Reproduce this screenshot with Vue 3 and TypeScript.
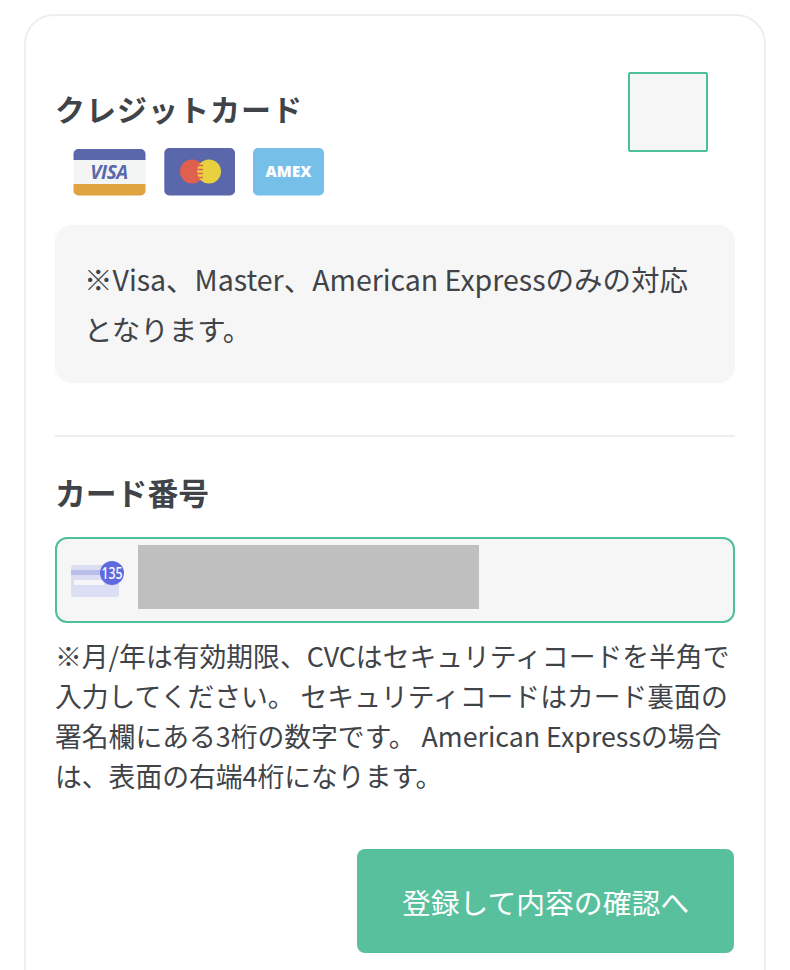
<script setup lang="ts">
const helpText =
  '※月/年は有効期限、CVCはセキュリティコードを半角で入力してください。 セキュリティコードはカード裏面の署名欄にある3桁の数字です。 American Expressの場合は、表面の右端4桁になります。'
</script>

<template>
  <main class="card">
    <section class="head">
      <div class="head-left">
        <h2 class="title">クレジットカード</h2>
        <div class="brands">
          <svg class="brand" width="73" height="48" viewBox="0 0 73 48">
            <rect x="0.5" y="1" width="72" height="46.5" rx="5" fill="#f3f5f4" />
            <path d="M0.5 12V6a5 5 0 0 1 5-5h62a5 5 0 0 1 5 5v6z" fill="#5a67ab" />
            <path d="M0.5 36h72v6.5a5 5 0 0 1-5 5h-62a5 5 0 0 1-5-5z" fill="#dfa33f" />
            <text x="36" y="31" text-anchor="middle" class="visa">VISA</text>
          </svg>
          <svg class="brand" width="71" height="48" viewBox="0 0 71 48">
            <rect x="0.3" y="0" width="70.7" height="47.5" rx="5" fill="#5a67ab" />
            <circle cx="28" cy="23.5" r="12" fill="#e0604f" />
            <circle cx="45" cy="23.5" r="12" fill="#e8d03f" />
            <path d="M34 17.5h5M33 21.5h6M33 25.5h6M34 29.5h5" stroke="#e0604f" stroke-width="1.6" />
          </svg>
          <svg class="brand" width="71" height="48" viewBox="0 0 71 48">
            <rect x="0" y="0" width="71" height="47.5" rx="5" fill="#75bfe9" />
            <text x="35.5" y="29" text-anchor="middle" class="amex">AMEX</text>
          </svg>
        </div>
      </div>
      <div class="check"></div>
    </section>

    <p class="note">※Visa、Master、American Expressのみの対応となります。</p>

    <hr class="rule" />

    <h3 class="label">カード番号</h3>
    <div class="field">
      <span class="card-icon">
        <svg width="54" height="40" viewBox="0 0 54 40">
          <rect x="0" y="5" width="48" height="32" rx="3" fill="#dcdff4" />
          <rect x="0" y="10" width="48" height="5" fill="#babfea" />
          <rect x="3" y="20" width="30" height="5" rx="1" fill="#f6f6f8" />
          <circle cx="41" cy="13" r="12" fill="#5f6ae0" />
          <text transform="translate(41 19) scale(0.72 1)" text-anchor="middle" class="badge">135</text>
        </svg>
      </span>
      <div class="mask"></div>
    </div>
    <p class="help">{{ helpText }}</p>

    <div class="actions">
      <button class="submit" type="button">登録して内容の確認へ</button>
    </div>
  </main>
</template>

<style>
html, body {
  margin: 0;
  background: #fff;
  overflow: hidden;
}
</style>

<style scoped>
.card {
  box-sizing: border-box;
  width: 742px;
  height: 1000px;
  margin: 14px 0 0 24px;
  padding: 0 29px;
  border: 2px solid #eeeeee;
  border-radius: 30px;
  background: #fff;
  color: #404348;
  font-family: "Noto Sans CJK JP", "Noto Sans", sans-serif;
}
.head {
  display: flex;
  justify-content: space-between;
  padding: 56px 27px 0 0;
}
.head-left {
  padding-top: 16px;
}
.title {
  margin: 0;
  font-size: 30px;
  line-height: 40px;
  font-weight: 700;
  letter-spacing: 1px;
}
.brands {
  display: flex;
  gap: 18px;
  margin: 20px 0 0 18px;
  height: 48px;
}
.brand {
  display: block;
}
.visa {
  font: italic 700 19px "Open Sans", sans-serif;
  letter-spacing: -0.5px;
  fill: #5a67ab;
}
.amex {
  font: 800 15.5px "Open Sans", sans-serif;
  fill: #fff;
}
.check {
  box-sizing: border-box;
  width: 80px;
  height: 80px;
  border: 2px solid #4cc198;
  border-radius: 2px;
  background: #f6f6f6;
}
.note {
  box-sizing: border-box;
  height: 158px;
  margin: 29px 0 0;
  padding: 29px 29px 0;
  border-radius: 16px;
  background: #f6f6f6;
  font-size: 28.5px;
  line-height: 50px;
}
.rule {
  height: 2px;
  margin: 52px 0 0;
  border: 0;
  background: #eeeeee;
}
.label {
  margin: 33px 0 0;
  font-size: 30.8px;
  line-height: 44px;
  font-weight: 700;
}
.field {
  box-sizing: border-box;
  display: flex;
  align-items: center;
  height: 86px;
  margin-top: 23px;
  padding-left: 14px;
  border: 2px solid #4cc198;
  border-radius: 12px;
  background: #f6f6f6;
}
.card-icon {
  display: block;
  width: 54px;
  height: 40px;
}
.card-icon svg {
  display: block;
}
.badge {
  font: 500 17px "Noto Sans", sans-serif;
  fill: #fff;
}
.mask {
  width: 341px;
  height: 64px;
  margin: 0 0 6px 13px;
  background: #bfbfbf;
}
.help {
  margin: 13px 0 0;
  font-size: 26.8px;
  line-height: 40px;
}
.actions {
  display: flex;
  justify-content: flex-end;
  margin-top: 53px;
  padding-right: 1px;
}
.submit {
  width: 377px;
  height: 104px;
  padding: 0;
  border: 0;
  border-radius: 8px;
  background: #58c09c;
  color: #fff;
  font-family: inherit;
  font-size: 28.8px;
}
</style>
